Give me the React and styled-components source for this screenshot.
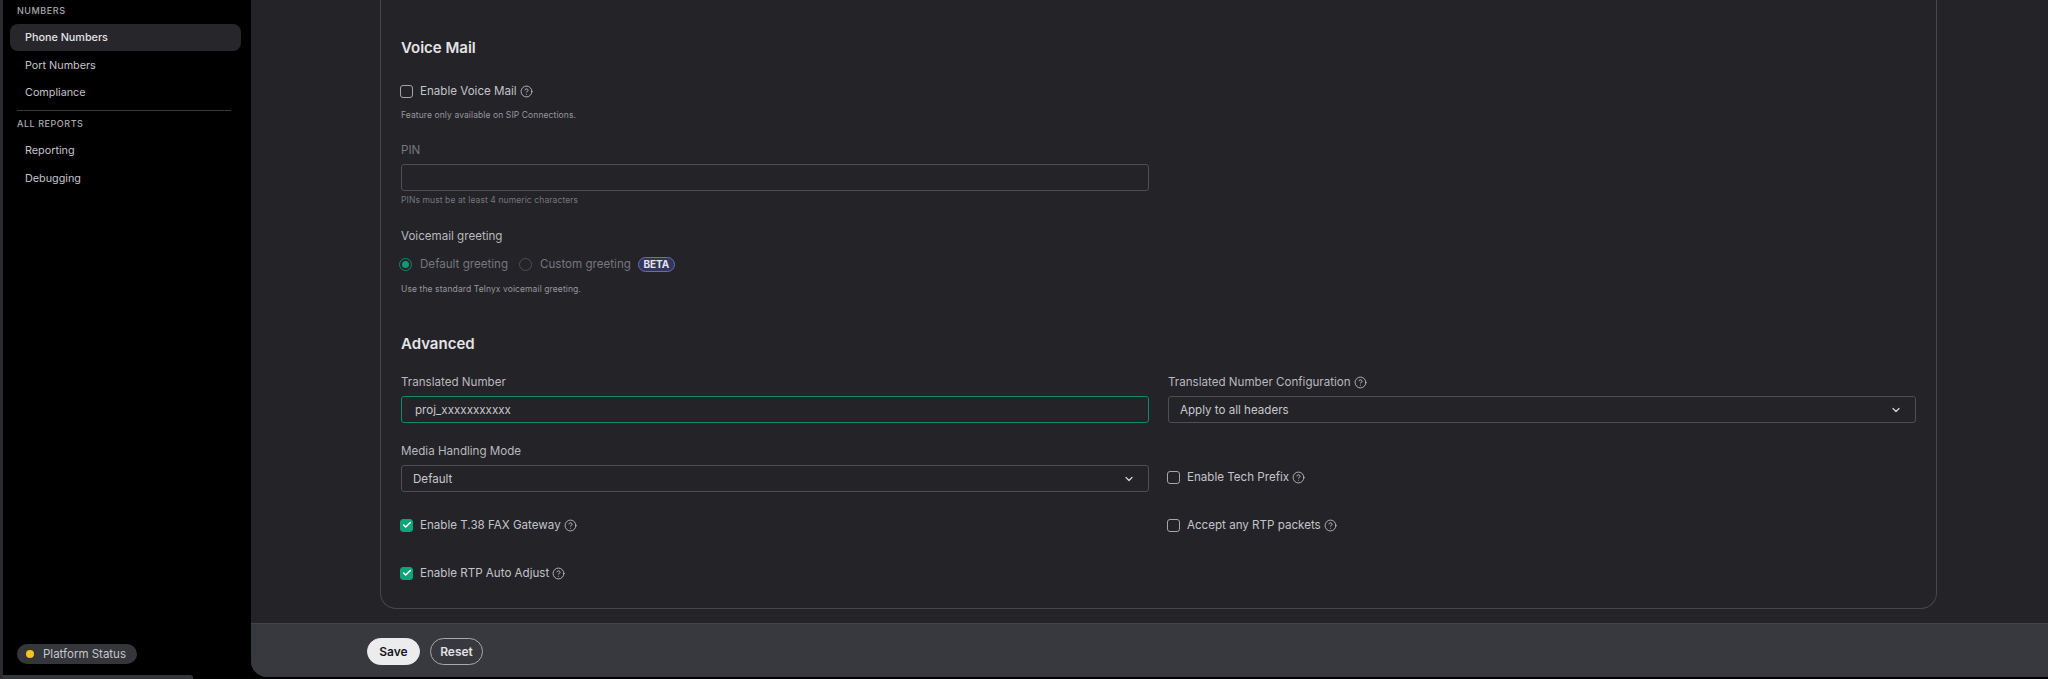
import React from "react";
import styled, { createGlobalStyle } from "styled-components";
import { ChevronDown, CircleHelp, Check } from "lucide-react";

const Global = createGlobalStyle`
  html, body { margin: 0; padding: 0; height: 100%; background: #000; overflow: hidden; }
  body { font-family: Inter, "Noto Sans", sans-serif; -webkit-font-smoothing: antialiased; }
  #root { height: 100%; }
  * { box-sizing: border-box; }
`;

const Shell = styled.div`
  position: relative;
  display: flex;
  width: 2048px;
  height: 679px;
  background: #000;
  border-left: 3px solid #2b2b30;
`;

const Sidebar = styled.aside`
  width: 248px;
  flex: none;
  display: flex;
  flex-direction: column;
  padding: 5px 10px 15px 7px;
`;

const SectionLabel = styled.div`
  font-size: 9px;
  line-height: 12px;
  font-weight: 500;
  letter-spacing: 0.55px;
  color: #a9a9ae;
  padding-left: 7px;
  text-transform: uppercase;
`;

const NavList = styled.nav`
  display: flex;
  flex-direction: column;
  gap: 0.7px;
  margin-top: 7px;
`;

const NavItem = styled.a`
  display: flex;
  align-items: center;
  height: 27px;
  padding-left: 15px;
  border-radius: 8px;
  font-size: 10.8px;
  font-weight: ${(p) => (p.$active ? 500 : 400)};
  color: ${(p) => (p.$active ? "#e4e4e7" : "#c4c4c8")};
  background: ${(p) => (p.$active ? "#26262b" : "transparent")};
`;

const SideDivider = styled.hr`
  border: 0;
  height: 1px;
  background: #38383d;
  margin: 3.6px 10px 7px 7px;
`;

const Spacer = styled.div`
  flex: 1;
`;

const StatusPill = styled.div`
  display: inline-flex;
  align-items: center;
  align-self: flex-start;
  gap: 9px;
  height: 20px;
  margin-left: 7px;
  padding: 0 9px;
  width: 120px;
  border-radius: 10px;
  background: #35363c;
  color: #c6c6ca;
  font-size: 11.5px;
  white-space: nowrap;
`;

const StatusDot = styled.span`
  width: 8px;
  height: 8px;
  flex: none;
  border-radius: 50%;
  background: #f5c518;
`;

const Main = styled.main`
  flex: 1;
  min-width: 0;
  display: flex;
  flex-direction: column;
  height: 677px;
  background: #232328;
  border-bottom-left-radius: 16px;
  overflow: hidden;
`;

const Scroll = styled.div`
  flex: 1;
  min-height: 0;
  padding-right: 111px;
  padding-left: 129px;
`;

const Card = styled.section`
  height: 609px;
  border: 1px solid #46474c;
  border-top: none;
  border-radius: 0 0 16px 16px;
  padding: 38px 20px 0;
`;

const SectionTitle = styled.h2`
  margin: 0;
  font-size: 15px;
  line-height: 20px;
  font-weight: 600;
  color: #e4e4e7;
`;

const Gap = styled.div`
  height: ${(p) => p.$h}px;
`;

const CheckRow = styled.label`
  display: flex;
  align-items: center;
  height: 14px;
  margin-left: -1px;
  font-size: 11.6px;
  color: #c4c4c8;
`;

const Box = styled.span`
  width: 13px;
  height: 13px;
  flex: none;
  display: flex;
  align-items: center;
  justify-content: center;
  margin-right: 7px;
  border-radius: 3px;
  border: 1px solid ${(p) => (p.$checked ? "#0ea47a" : "#a5a5aa")};
  background: ${(p) => (p.$checked ? "#0ea47a" : "transparent")};
  color: #fff;
`;

const HelpWrap = styled.span`
  display: flex;
  margin-left: 3px;
`;

const Hint = styled.p`
  margin: ${(p) => p.$mt || 0}px 0 0;
  font-size: 8.5px;
  line-height: 12px;
  letter-spacing: 0.1px;
  color: ${(p) => (p.$dim ? "#77777c" : "#97979c")};
`;

const FieldLabel = styled.div`
  display: flex;
  align-items: center;
  font-size: 11.6px;
  line-height: 14px;
  color: ${(p) => (p.$dim ? "#77777c" : "#b9b9bd")};
  margin-bottom: 7px;
`;

const Input = styled.div`
  height: 27px;
  display: flex;
  align-items: center;
  padding-left: 13px;
  border: 1px solid ${(p) => (p.$focus ? "#12876a" : "#4e4f54")};
  border-radius: 3px;
  font-size: 11.6px;
  color: #c8c8cc;
`;

const PinField = styled.div`
  width: 748px;
`;

const Select = styled(Input)`
  justify-content: space-between;
  padding: 0 13px 0 11px;
`;

const RadioRow = styled.div`
  display: flex;
  align-items: center;
  height: 16px;
  margin-left: -2px;
  font-size: 11.6px;
  color: #77777c;
`;

const Radio = styled.span`
  width: 13px;
  height: 13px;
  flex: none;
  display: flex;
  align-items: center;
  justify-content: center;
  border-radius: 50%;
  margin-right: 8px;
  border: 1px solid ${(p) => (p.$on ? "#0d8a68" : "#4d4e53")};
  &::after {
    content: "";
    width: 7px;
    height: 7px;
    border-radius: 50%;
    background: ${(p) => (p.$on ? "#0d9a74" : "transparent")};
  }
`;

const RadioText = styled.span`
  margin-right: ${(p) => p.$mr || 0}px;
`;

const Badge = styled.span`
  display: flex;
  align-items: center;
  justify-content: center;
  width: 37px;
  height: 15px;
  border-radius: 8px;
  border: 1px solid #6a6bb5;
  background: #34355a;
  color: #e3e3f0;
  font-size: 10px;
  font-weight: 700;
`;

const Grid = styled.div`
  display: grid;
  grid-template-columns: 748px 748px;
  column-gap: 19px;
  margin-top: 21px;
`;

const Cell = styled.div`
  height: ${(p) => p.$h}px;
`;

const CheckCell = styled.div`
  height: ${(p) => p.$h}px;
  padding-top: ${(p) => p.$pt}px;
`;

const Footer = styled.footer`
  flex: none;
  height: 54px;
  display: flex;
  align-items: center;
  gap: 10px;
  padding: 1px 0 0 116px;
  border-top: 1px solid #44454a;
  background: #38393e;
`;

const Button = styled.button`
  width: 53px;
  height: 27px;
  border-radius: 14px;
  font-family: inherit;
  font-size: 12px;
  font-weight: 600;
  padding: 0;
  border: 1px solid ${(p) => (p.$primary ? "#ececef" : "#a9a9ae")};
  background: ${(p) => (p.$primary ? "#ececef" : "transparent")};
  color: ${(p) => (p.$primary ? "#18181b" : "#e2e2e5")};
`;

const BottomTab = styled.div`
  position: absolute;
  left: 0;
  bottom: 0;
  width: 190px;
  height: 4px;
  background: #35363b;
  border-top-right-radius: 3px;
`;

const Help = () => (
  <HelpWrap>
    <CircleHelp size={13} strokeWidth={1.6} color="#c4c4c8" />
  </HelpWrap>
);

const Checkbox = ({ checked, children }) => (
  <CheckRow>
    <Box $checked={checked}>{checked && <Check size={10} strokeWidth={3.5} />}</Box>
    {children}
    <Help />
  </CheckRow>
);

const Chevron = () => <ChevronDown size={12} strokeWidth={2.4} color="#d8d8dc" />;

export default function App() {
  return (
    <>
      <Global />
      <Shell>
        <Sidebar>
          <SectionLabel>Numbers</SectionLabel>
          <NavList>
            <NavItem $active>Phone Numbers</NavItem>
            <NavItem>Port Numbers</NavItem>
            <NavItem>Compliance</NavItem>
          </NavList>
          <SideDivider />
          <SectionLabel>All Reports</SectionLabel>
          <NavList>
            <NavItem>Reporting</NavItem>
            <NavItem>Debugging</NavItem>
          </NavList>
          <Spacer />
          <StatusPill>
            <StatusDot />
            Platform Status
          </StatusPill>
        </Sidebar>
        <Main>
          <Scroll>
            <Card>
              <SectionTitle>Voice Mail</SectionTitle>
              <Gap $h={26} />
              <Checkbox>Enable Voice Mail</Checkbox>
              <Hint $mt={11}>Feature only available on SIP Connections.</Hint>
              <Gap $h={22} />
              <FieldLabel $dim>PIN</FieldLabel>
              <PinField>
                <Input />
              </PinField>
              <Hint $dim $mt={3}>PINs must be at least 4 numeric characters</Hint>
              <Gap $h={23} />
              <FieldLabel>Voicemail greeting</FieldLabel>
              <Gap $h={6} />
              <RadioRow>
                <Radio $on />
                <RadioText $mr={11}>Default greeting</RadioText>
                <Radio />
                <RadioText $mr={7}>Custom greeting</RadioText>
                <Badge>BETA</Badge>
              </RadioRow>
              <Hint $mt={11}>Use the standard Telnyx voicemail greeting.</Hint>
              <Gap $h={39} />
              <SectionTitle>Advanced</SectionTitle>
              <Grid>
                <Cell $h={69}>
                  <FieldLabel>Translated Number</FieldLabel>
                  <Input $focus>proj_xxxxxxxxxxx</Input>
                </Cell>
                <Cell $h={69}>
                  <FieldLabel>
                    Translated Number Configuration <Help />
                  </FieldLabel>
                  <Select>
                    Apply to all headers
                    <Chevron />
                  </Select>
                </Cell>
                <Cell $h={68}>
                  <FieldLabel>Media Handling Mode</FieldLabel>
                  <Select>
                    Default
                    <Chevron />
                  </Select>
                </Cell>
                <CheckCell $h={68} $pt={26}>
                  <Checkbox>Enable Tech Prefix</Checkbox>
                </CheckCell>
                <CheckCell $h={49} $pt={6}>
                  <Checkbox checked>Enable T.38 FAX Gateway</Checkbox>
                </CheckCell>
                <CheckCell $h={49} $pt={6}>
                  <Checkbox>Accept any RTP packets</Checkbox>
                </CheckCell>
                <CheckCell $h={20} $pt={5}>
                  <Checkbox checked>Enable RTP Auto Adjust</Checkbox>
                </CheckCell>
              </Grid>
            </Card>
          </Scroll>
          <Footer>
            <Button $primary>Save</Button>
            <Button>Reset</Button>
          </Footer>
        </Main>
        <BottomTab />
      </Shell>
    </>
  );
}
